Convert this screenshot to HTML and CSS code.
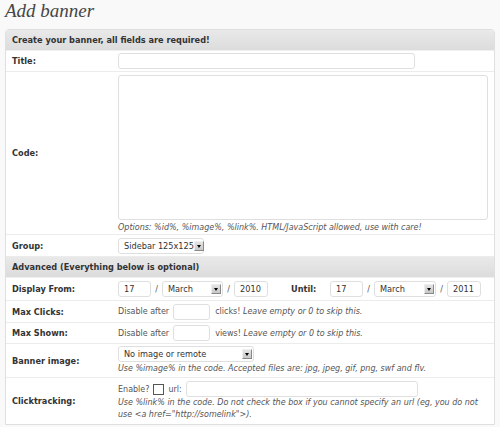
FILE: index.html
```html
<!DOCTYPE html>
<html>
<head>
<meta charset="utf-8">
<link rel="stylesheet" href="styles.css">
</head>
<body>
<h2 class="page-title">Add banner</h2>
<table class="form">
  <colgroup><col class="c-lbl"><col class="c-val"></colgroup>
  <tr class="head h21"><th colspan="2">Create your banner, all fields are required!</th></tr>
  <tr class="h21">
    <th class="lbl">Title:</th>
    <td><span class="inp w-title"></span></td>
  </tr>
  <tr class="h163">
    <th class="lbl">Code:</th>
    <td class="code-cell"><span class="inp textarea"></span><div class="help">Options: %id%, %image%, %link%. HTML/JavaScript allowed, use with care!</div></td>
  </tr>
  <tr class="h22">
    <th class="lbl">Group:</th>
    <td><span class="sel w-group"><span class="sel-text">Sidebar 125x125</span><span class="arrow"></span></span></td>
  </tr>
  <tr class="head h21"><th colspan="2">Advanced (Everything below is optional)</th></tr>
  <tr class="h23">
    <th class="lbl">Display From:</th>
    <td>
      <div class="line">
        <span class="inp w-day">17</span><span class="slash">/</span><span class="sel w-month"><span class="sel-text">March</span><span class="arrow"></span></span><span class="slash">/</span><span class="inp w-year">2010</span>
        <span class="until">Until:</span>
        <span class="inp w-day">17</span><span class="slash">/</span><span class="sel w-month2"><span class="sel-text">March</span><span class="arrow"></span></span><span class="slash">/</span><span class="inp w-year">2011</span>
      </div>
    </td>
  </tr>
  <tr class="h22">
    <th class="lbl">Max Clicks:</th>
    <td><div class="line"><span class="txt">Disable after</span><span class="inp w-num"></span><span class="txt">clicks! <em>Leave empty or 0 to skip this.</em></span></div></td>
  </tr>
  <tr class="h21">
    <th class="lbl">Max Shown:</th>
    <td><div class="line"><span class="txt">Disable after</span><span class="inp w-num"></span><span class="txt">views! <em>Leave empty or 0 to skip this.</em></span></div></td>
  </tr>
  <tr class="h34">
    <th class="lbl">Banner image:</th>
    <td><span class="sel w-image"><span class="sel-text">No image or remote</span><span class="arrow"></span></span><div class="help help-img">Use %image% in the code. Accepted files are: jpg, jpeg, gif, png, swf and flv.</div></td>
  </tr>
  <tr class="h46 last">
    <th class="lbl">Clicktracking:</th>
    <td><div class="line"><span class="txt">Enable?</span><span class="check"></span><span class="txt">url:</span><span class="inp w-url"></span></div><div class="help">Use %link% in the code. Do not check the box if you cannot specify an url (eg, you do not use &lt;a href="http://somelink"&gt;).</div></td>
  </tr>
</table>
</body>
</html>
```

FILE: styles.css
```css
html, body {
  margin: 0;
  padding: 0;
  background: #f9f9f9;
}
body {
  font-family: "DejaVu Sans", Verdana, sans-serif;
  font-size: 8px;
  color: #555;
}
.page-title {
  margin: 0;
  padding: 0 0 0 5px;
  height: 29px;
  box-sizing: border-box;
  font-family: "Liberation Serif", Georgia, serif;
  font-style: italic;
  font-weight: normal;
  font-size: 19px;
  line-height: 22px;
  color: #464646;
}
.form {
  margin-left: 5px;
  width: 490px;
  table-layout: fixed;
  border-collapse: separate;
  border-spacing: 0;
  border: 1px solid #dfdfdf;
  border-radius: 4px 4px 0 0;
  background: #fff;
}
.c-lbl { width: 106px; }
.form th, .form td {
  padding: 0 6px;
  border-bottom: 1px solid #ececec;
  vertical-align: middle;
  text-align: left;
  white-space: nowrap;
}
.form tr.last th, .form tr.last td { border-bottom: none; }
.form th.lbl, .form .head th {
  font-weight: bold;
  font-size: 8.2px;
  color: #333;
}
.form .head th {
  background: linear-gradient(#e9e9e9, #dcdcdc);
  border-bottom: 1px solid #f0f0f0;
}
.form tr.head:first-of-type th { border-radius: 3px 3px 0 0; }
.h21 { height: 21px; }
.h22 { height: 22px; }
.h23 { height: 23px; }
.h34 { height: 34px; }
.h46 { height: 46px; }
.h163 { height: 163px; }

.inp {
  display: inline-block;
  box-sizing: border-box;
  height: 16px;
  border: 1px solid #dfdfdf;
  border-radius: 3px;
  background: #fff;
  padding: 0 5px;
  line-height: 14px;
  font-size: 8.2px;
  vertical-align: middle;
  color: #333;
}
.w-title { width: 297px; }
.textarea { display: block; width: 370px; height: 145px; margin-top: 2px; }
.help {
  font-style: italic;
  color: #555;
  line-height: 12px;
  white-space: normal;
}
.code-cell .help { margin-top: 2px; }
.help-img { margin-top: 1px; }

.sel {
  display: inline-flex;
  align-items: center;
  justify-content: space-between;
  box-sizing: border-box;
  height: 16px;
  border: 1px solid #dfdfdf;
  border-radius: 3px;
  background: #fff;
  padding: 0 1px 0 5px;
  font-size: 8.2px;
  vertical-align: middle;
  color: #333;
  white-space: nowrap;
}
.arrow {
  width: 10px;
  height: 10px;
  box-sizing: border-box;
  border: 1px solid #888;
  border-top-color: #eee;
  border-left-color: #eee;
  background: linear-gradient(#e4e4e4, #c8c8c8);
  position: relative;
  flex: none;
}
.arrow::after {
  content: "";
  position: absolute;
  left: 2px;
  top: 3px;
  border-left: 2px solid transparent;
  border-right: 2px solid transparent;
  border-top: 3px solid #000;
}
.w-group { width: 86px; }
.w-month { width: 61px; }
.w-month2 { width: 62px; }
.w-image { width: 136px; }

.line {
  display: flex;
  align-items: center;
}
.w-day { width: 33px; }
.w-year { width: 34px; }
.slash { width: 11px; text-align: center; color: #555; }
.until { font-weight: bold; font-size: 8.2px; color: #333; margin: 0 13px 0 23px; width: 26px; }
.w-num { width: 37px; margin: 0 5px 0 4px; }
.txt { color: #555; }
.txt em { font-style: italic; color: #555; }
.check {
  display: inline-block;
  width: 9px;
  height: 9px;
  border: 1px solid #555;
  background: #fff;
  margin: 0 5px 0 3px;
}
.w-url { width: 232px; margin-left: 4px; }
```
